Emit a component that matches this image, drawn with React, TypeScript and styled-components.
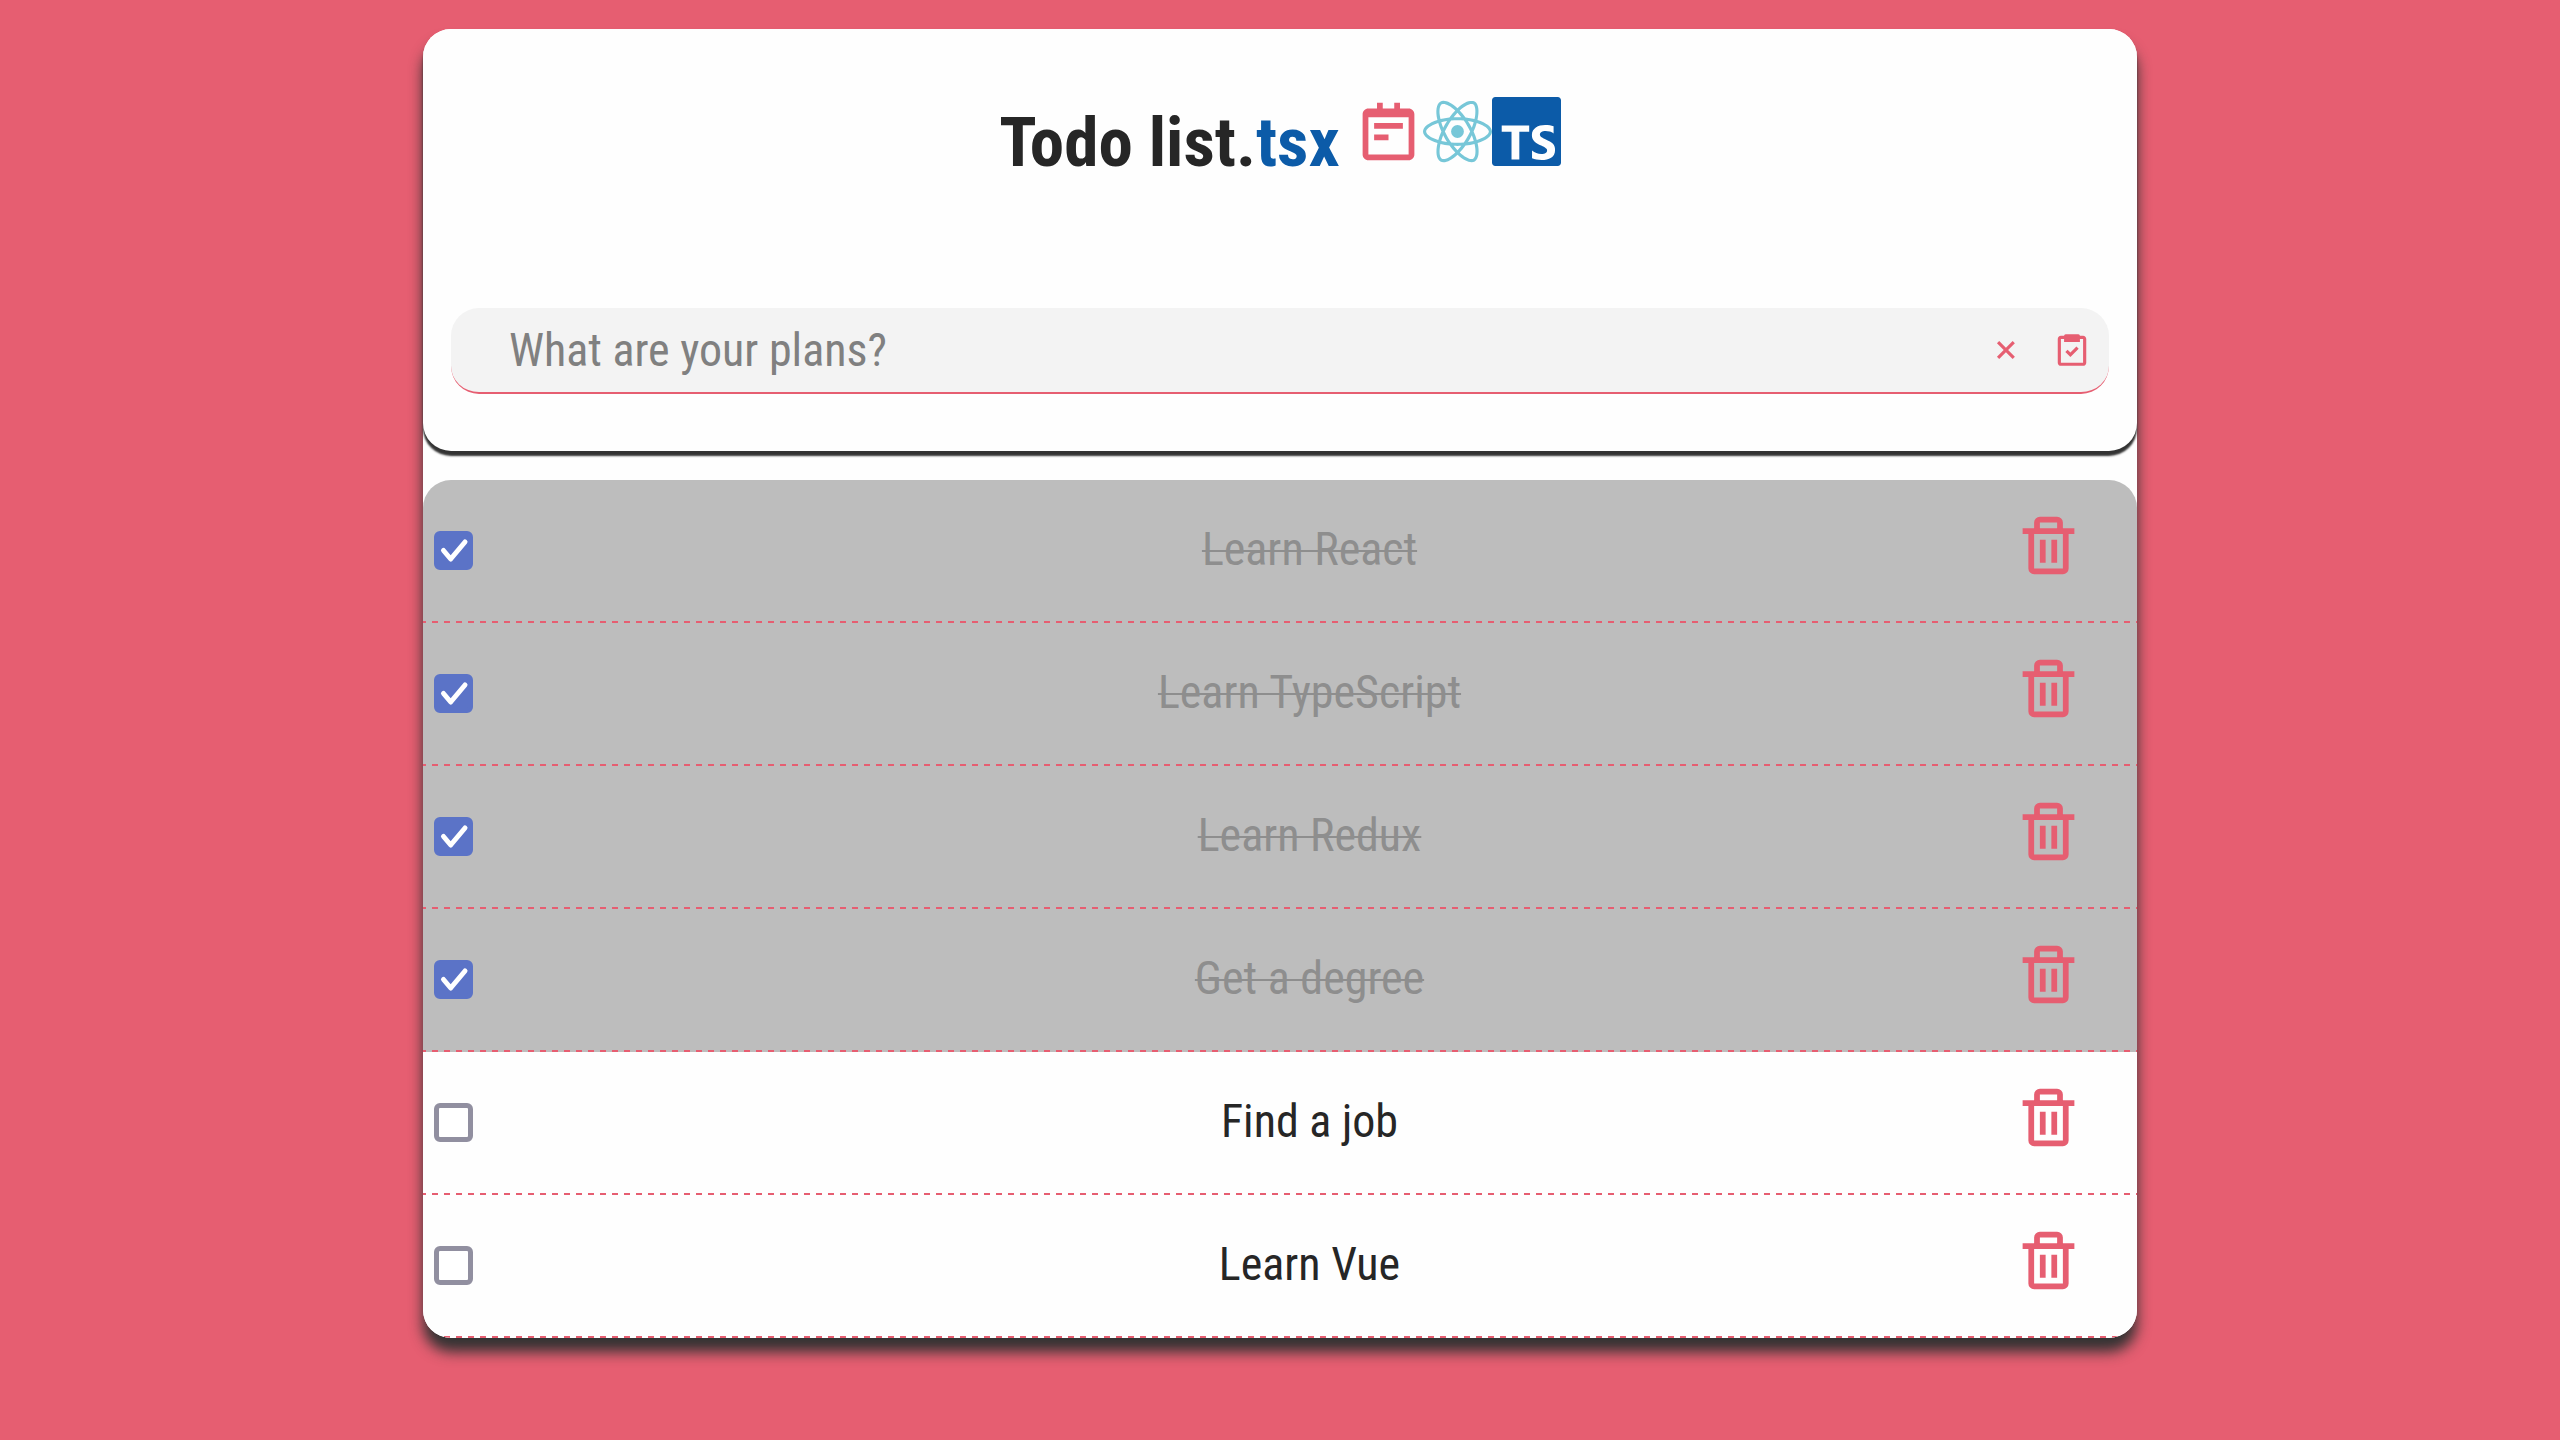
import React, { useState } from "react";
import styled, { createGlobalStyle } from "styled-components";
import { BiNotepad, BiTask, BiTrash, BiX } from "react-icons/bi";
import { SiReact, SiTypescript } from "react-icons/si";

const pink = "#e65e71";
const blue = "#0c5ba8";
const ink = "#262626";
const paper = "#fefefe";

const GlobalStyle = createGlobalStyle`
  *, *::before, *::after { box-sizing: border-box; }
  body {
    margin: 0;
    background: ${pink};
    color: ${ink};
    font-family: "Roboto Condensed", Roboto, sans-serif;
    font-size: 46px;
  }
  button { border: 0; padding: 0; background: none; color: ${pink}; cursor: pointer; }
  svg { display: block; }
`;

const Page = styled.main`
  display: flex;
  justify-content: center;
  padding: 29px 0 58px;
`;

const Card = styled.div`
  width: 67%;
  max-width: 1714px;
  border-radius: 28px;
  background: ${paper};
  box-shadow: 0 14px 14px #333;
`;

const Header = styled.header`
  display: flex;
  flex-direction: column;
  gap: 108px;
  padding: 57px 28px;
  border-radius: 28px;
  background: ${paper};
  box-shadow: 0 5px 2px #333;
`;

const Title = styled.h1`
  display: flex;
  justify-content: center;
  align-items: baseline;
  margin: 0;
  font-size: 69px;
  line-height: 114px;
  font-weight: 700;
`;

const Extension = styled.span`
  color: ${blue};
`;

const Logos = styled.span`
  display: flex;
  margin-left: 14px;
`;

const Form = styled.form`
  display: flex;
  align-items: center;
  gap: 28px;
  height: 86px;
  padding: 0 18px 0 58px;
  border-bottom: 2px solid ${pink};
  border-radius: 28px;
  background: #f3f3f3;
`;

const PlanInput = styled.input`
  flex: 1;
  min-width: 0;
  border: 0;
  padding: 0;
  outline: 0;
  background: none;
  color: ${ink};
  font: inherit;
  &::placeholder { color: #808080; opacity: 1; }
`;

const List = styled.ul`
  margin: 29px 0 0;
  padding: 0;
  overflow: hidden;
  border-radius: 28px;
  list-style: none;
`;

const Row = styled.li<{ $done: boolean }>`
  display: grid;
  grid-template-columns: 182px 1fr 123px;
  align-items: center;
  height: 143px;
  padding-bottom: 2px;
  background:
    repeating-linear-gradient(90deg, ${pink} 0 3px, transparent 3px 9px, ${pink} 9px 12px)
      bottom / 100% 2px no-repeat,
    ${(p) => (p.$done ? "#bdbdbd" : paper)};
`;

const Tick = styled.span`
  display: grid;
  justify-content: start;
  padding-left: 11px;
  > * { grid-area: 1 / 1; }
  > svg { pointer-events: none; }
`;

const Checkbox = styled.input`
  appearance: none;
  width: 39px;
  height: 39px;
  margin: 0;
  border: 5px solid #918fa0;
  border-radius: 6px;
  background: #fff;
  &:checked { border-color: #5b73c7; background: #5b73c7; }
`;

const Label = styled.label<{ $done: boolean }>`
  padding-bottom: 3px;
  color: ${(p) => (p.$done ? "#8e8e8e" : ink)};
  text-align: center;
  text-decoration: ${(p) => (p.$done ? "line-through 2px" : "none")};
`;

const DeleteButton = styled.button`
  justify-self: start;
  padding-bottom: 10px;
`;

const initialTodos = [
  { title: "Learn React", done: true },
  { title: "Learn TypeScript", done: true },
  { title: "Learn Redux", done: true },
  { title: "Get a degree", done: true },
  { title: "Find a job", done: false },
  { title: "Learn Vue", done: false },
];

export default function App() {
  const [todos, setTodos] = useState(initialTodos);
  const [plan, setPlan] = useState("");

  const add = (e: React.FormEvent) => {
    e.preventDefault();
    if (!plan.trim()) return;
    setTodos([...todos, { title: plan.trim(), done: false }]);
    setPlan("");
  };
  const toggle = (index: number) =>
    setTodos(todos.map((t, i) => (i === index ? { ...t, done: !t.done } : t)));
  const remove = (index: number) => setTodos(todos.filter((_, i) => i !== index));

  return (
    <>
      <GlobalStyle />
      <Page>
        <Card>
          <Header>
            <Title>
              <span>
                Todo list.<Extension>tsx</Extension>
              </span>
              <Logos>
                <BiNotepad size={69} color={pink} />
                <SiReact size={69} color="#77c7d8" />
                <SiTypescript size={69} color={blue} />
              </Logos>
            </Title>
            <Form onSubmit={add}>
              <PlanInput
                aria-label="New plan"
                placeholder="What are your plans?"
                value={plan}
                onChange={(e) => setPlan(e.target.value)}
              />
              <button type="button" aria-label="Clear" onClick={() => setPlan("")}>
                <BiX size={38} />
              </button>
              <button type="submit" aria-label="Add">
                <BiTask size={38} />
              </button>
            </Form>
          </Header>
          <List>
            {todos.map((todo, i) => (
              <Row key={todo.title} $done={todo.done}>
                <Tick>
                  <Checkbox
                    type="checkbox"
                    id={`todo-${i}`}
                    checked={todo.done}
                    onChange={() => toggle(i)}
                  />
                  {todo.done && (
                    <svg width="39" height="39" viewBox="0 0 39 39" fill="none">
                      <path
                        d="M9.5 19.5 16.7 28 31 11"
                        stroke="#fff"
                        strokeWidth="5"
                        strokeLinecap="round"
                        strokeLinejoin="round"
                      />
                    </svg>
                  )}
                </Tick>
                <Label htmlFor={`todo-${i}`} $done={todo.done}>
                  {todo.title}
                </Label>
                <DeleteButton type="button" aria-label={`Delete ${todo.title}`} onClick={() => remove(i)}>
                  <BiTrash size={69} />
                </DeleteButton>
              </Row>
            ))}
          </List>
        </Card>
      </Page>
    </>
  );
}
